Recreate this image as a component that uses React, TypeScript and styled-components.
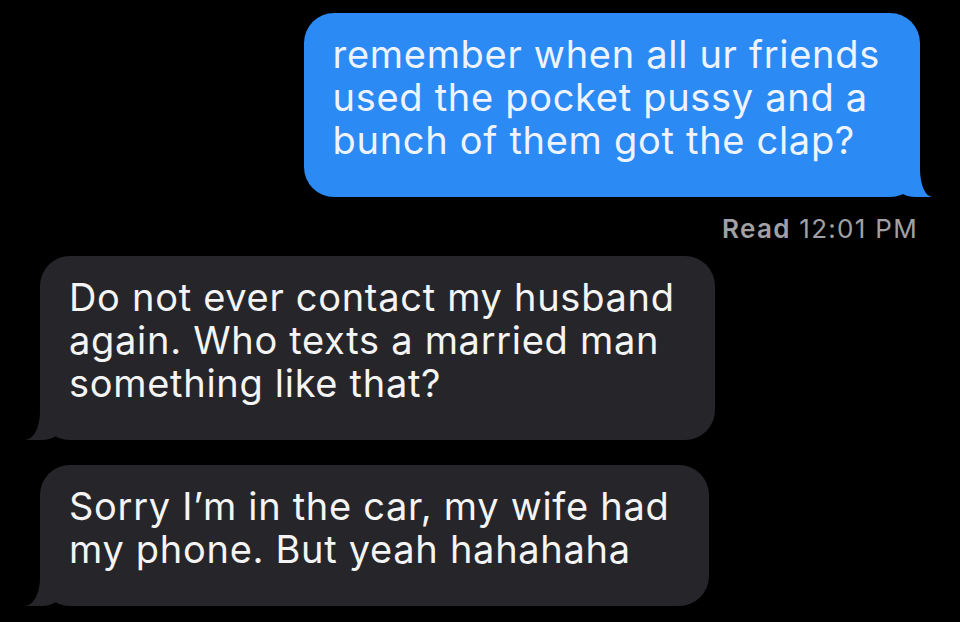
import styled, { createGlobalStyle } from "styled-components";

const GlobalStyle = createGlobalStyle`
  html, body {
    margin: 0;
    padding: 0;
    background: #000;
  }
  body {
    font-family: Inter, "Liberation Sans", Arial, sans-serif;
    -webkit-font-smoothing: antialiased;
  }
`;

const Thread = styled.div`
  width: 960px;
  height: 622px;
  box-sizing: border-box;
  padding: 13px 40px 0 40px;
  background: #000;
  display: flex;
  flex-direction: column;
  overflow: hidden;
`;

interface BubbleProps {
  $sent?: boolean;
}

const Bubble = styled.div<BubbleProps>`
  position: relative;
  align-self: ${({ $sent }) => ($sent ? "flex-end" : "flex-start")};
  box-sizing: border-box;
  padding: 20px 40px 35px 29px;
  border-radius: 30px;
  background: ${({ $sent }) => ($sent ? "#2b8af4" : "#262529")};
  color: ${({ $sent }) => ($sent ? "#eef4ff" : "#f4f4f4")};
  font-size: 38px;
  line-height: 43px;
  letter-spacing: 0.7px;
  white-space: pre-line;

  /* tail: a filled block, then a black block with a rounded corner cut into it */
  &::before {
    content: "";
    position: absolute;
    bottom: 0;
    ${({ $sent }) => ($sent ? "right: -12px;" : "left: -15px;")}
    width: 40px;
    height: 34px;
    background: ${({ $sent }) => ($sent ? "#2b8af4" : "#262529")};
    ${({ $sent }) =>
      $sent
        ? "border-bottom-left-radius: 24px 18px;"
        : "border-bottom-right-radius: 24px 18px;"}
  }

  &::after {
    content: "";
    position: absolute;
    bottom: 0;
    ${({ $sent }) => ($sent ? "right: -22px;" : "left: -22px;")}
    width: 22px;
    height: 36px;
    background: #000;
    ${({ $sent }) =>
      $sent
        ? "border-bottom-left-radius: 12px 28px;"
        : "border-bottom-right-radius: 15px 28px;"}
  }
`;

const Receipt = styled.div`
  align-self: flex-end;
  margin: 17px 2px 12px 0;
  font-size: 26px;
  line-height: 30px;
  color: #a0a0a5;
  letter-spacing: 1.3px;

  b {
    font-weight: 600;
  }
`;

const Spacer = styled.div`
  height: 25px;
  flex-shrink: 0;
`;

const messages = {
  sent: "remember when all ur friends\nused the pocket pussy and a\nbunch of them got the clap?",
  first: "Do not ever contact my husband\nagain. Who texts a married man\nsomething like that?",
  second: "Sorry I\u2019m in the car, my wife had\nmy phone. But yeah hahahaha",
};

export default function App() {
  return (
    <>
      <GlobalStyle />
      <Thread>
        <Bubble $sent>{messages.sent}</Bubble>
        <Receipt>
          <b>Read</b> 12:01 PM
        </Receipt>
        <Bubble>{messages.first}</Bubble>
        <Spacer />
        <Bubble>{messages.second}</Bubble>
      </Thread>
    </>
  );
}
